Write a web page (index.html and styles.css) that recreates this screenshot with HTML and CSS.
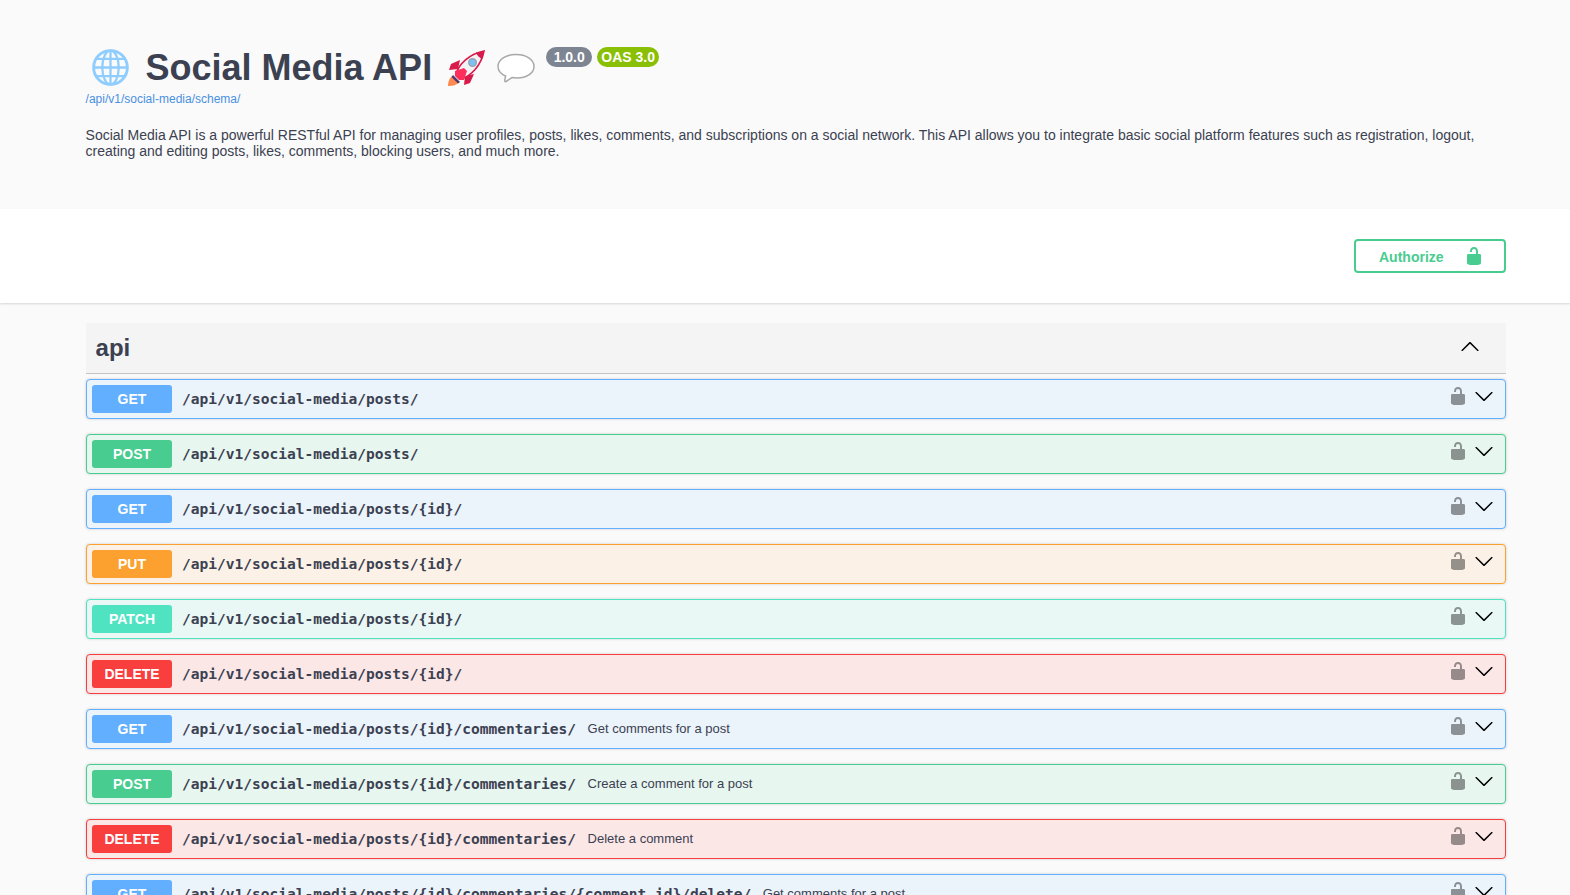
FILE: index.html
```html
<!DOCTYPE html>
<html lang="en">
<head>
<meta charset="utf-8">
<title>Social Media API</title>
<link rel="stylesheet" href="styles.css">
</head>
<body>
<svg class="defs" width="0" height="0" aria-hidden="true">
  <symbol id="lock" viewBox="0 0 20 20"><path d="M15.8 8H14V5.6C14 2.703 12.665 1 10 1 7.334 1 6 2.703 6 5.6V6h2v-.801C8 3.754 8.797 3 10 3c1.203 0 2 .754 2 2.199V8H4c-.553 0-1 .646-1 1.199V17c0 .549.428 1.139.951 1.307l1.197.387C5.672 18.861 6.55 19 7.1 19h5.8c.549 0 1.428-.139 1.951-.307l1.196-.387c.524-.167.953-.757.953-1.306V9.199C17 8.646 16.352 8 15.8 8z"/></symbol>
  <symbol id="arrow" viewBox="0 0 20 20"><path d="M17.418 6.109c.272-.268.709-.268.979 0s.271.701 0 .969l-7.908 7.83c-.27.268-.707.268-.979 0l-7.908-7.83c-.27-.268-.27-.701 0-.969.271-.268.709-.268.979 0L10 13.25l7.418-7.141z"/></symbol>
</svg>

<header class="info">
  <div class="title-row">
    <svg class="emoji globe" viewBox="0 0 36 36" fill="none" stroke="#90cdff" stroke-width="2.2">
      <circle cx="18" cy="18" r="16.4" stroke-width="2.8"/>
      <ellipse cx="18" cy="18" rx="8" ry="16.4"/>
      <path d="M18 1.600v32.800M1.600 18h32.800M4.200 9.500h27.600M4.200 26.500h27.600"/>
    </svg>
    <h1 class="title">Social Media API</h1>
    <svg class="emoji rocket" viewBox="0 0 38 38">
      <path d="M1 36c0-5 2-9 5-10l6 6c-2 3-6 4-11 4z" fill="#ff8a50"/>
      <path d="M13 10 4 14l-2 6 9-1z" fill="#d81b4a"/>
      <path d="M27 24l-4 9-6 2 1-9z" fill="#d81b4a"/>
      <path d="M9 24C12 14 22 4 37 1c-3 15-13 25-23 28z" fill="#f2f2f4" stroke="#d81b4a" stroke-width="1.600"/>
      <path d="M29 2.500 37 1l-1.500 8c-3-1-5.500-3.500-6.500-6.500z" fill="#d81b4a"/>
      <circle cx="25.500" cy="12.500" r="3.800" fill="#7cc0f5" stroke="#9aa3ad" stroke-width="1.400"/>
      <path d="M8 21l9-3 3 3-3 9-5 0-4-4z" fill="#ff2f5c"/>
      <path d="M6 25l7 7-2 1.500-6.500-6.500z" fill="#4a3a70"/>
    </svg>
    <svg class="emoji bubble" viewBox="0 0 38 30" fill="#ffffff" stroke="#a9a9a9" stroke-width="1.500">
      <path d="M19 1.500c10 0 18 5 18 12s-8 11.500-17 11.500c-2 0-4-.2-5-.4L9 28.500c-.8.4-1.500-.2-1.300-1l.9-4.500C4 21 1 17.500 1 13.500 1 6.500 9 1.500 19 1.500z"/>
    </svg>
    <div class="pills">
      <span class="pill version">1.0.0</span>
      <span class="pill oas">OAS 3.0</span>
    </div>
  </div>
  <a class="schema-link" href="#">/api/v1/social-media/schema/</a>
  <p class="description">Social Media API is a powerful RESTful API for managing user profiles, posts, likes, comments, and subscriptions on a social network. This API allows you to integrate basic social platform features such as registration, logout, creating and editing posts, likes, comments, blocking users, and much more.</p>
</header>

<section class="scheme">
  <button class="authorize" type="button"><span>Authorize</span><svg class="auth-lock"><use href="#lock"/></svg></button>
</section>

<main class="wrapper">
  <div class="tag">
    <h3 class="tag-name">api</h3>
    <svg class="tag-arrow"><use href="#arrow"/></svg>
  </div>
  <div class="ops">
    <div class="op get"><span class="method">GET</span><span class="path">/api/v1/social-media/posts/</span><span class="desc"></span><svg class="op-lock"><use href="#lock"/></svg><svg class="op-arrow"><use href="#arrow"/></svg></div>
    <div class="op post"><span class="method">POST</span><span class="path">/api/v1/social-media/posts/</span><span class="desc"></span><svg class="op-lock"><use href="#lock"/></svg><svg class="op-arrow"><use href="#arrow"/></svg></div>
    <div class="op get"><span class="method">GET</span><span class="path">/api/v1/social-media/posts/{id}/</span><span class="desc"></span><svg class="op-lock"><use href="#lock"/></svg><svg class="op-arrow"><use href="#arrow"/></svg></div>
    <div class="op put"><span class="method">PUT</span><span class="path">/api/v1/social-media/posts/{id}/</span><span class="desc"></span><svg class="op-lock"><use href="#lock"/></svg><svg class="op-arrow"><use href="#arrow"/></svg></div>
    <div class="op patch"><span class="method">PATCH</span><span class="path">/api/v1/social-media/posts/{id}/</span><span class="desc"></span><svg class="op-lock"><use href="#lock"/></svg><svg class="op-arrow"><use href="#arrow"/></svg></div>
    <div class="op delete"><span class="method">DELETE</span><span class="path">/api/v1/social-media/posts/{id}/</span><span class="desc"></span><svg class="op-lock"><use href="#lock"/></svg><svg class="op-arrow"><use href="#arrow"/></svg></div>
    <div class="op get"><span class="method">GET</span><span class="path">/api/v1/social-media/posts/{id}/commentaries/</span><span class="desc">Get comments for a post</span><svg class="op-lock"><use href="#lock"/></svg><svg class="op-arrow"><use href="#arrow"/></svg></div>
    <div class="op post"><span class="method">POST</span><span class="path">/api/v1/social-media/posts/{id}/commentaries/</span><span class="desc">Create a comment for a post</span><svg class="op-lock"><use href="#lock"/></svg><svg class="op-arrow"><use href="#arrow"/></svg></div>
    <div class="op delete"><span class="method">DELETE</span><span class="path">/api/v1/social-media/posts/{id}/commentaries/</span><span class="desc">Delete a comment</span><svg class="op-lock"><use href="#lock"/></svg><svg class="op-arrow"><use href="#arrow"/></svg></div>
    <div class="op get"><span class="method">GET</span><span class="path">/api/v1/social-media/posts/{id}/commentaries/{comment_id}/delete/</span><span class="desc">Get comments for a post</span><svg class="op-lock"><use href="#lock"/></svg><svg class="op-arrow"><use href="#arrow"/></svg></div>
  </div>
</main>
</body>
</html>
```

FILE: styles.css
```css
* { box-sizing: border-box; }
html { overflow: hidden; }
body {
  margin: 0;
  background: #fafafa;
  color: #3b4151;
  font-family: "Liberation Sans", Arial, sans-serif;
}
.defs { display: block; height: 0; }

.info {
  height: 209px;
  padding: 47px 64px 0 85.6px;
  background: #fafafa;
}
.title-row {
  display: flex;
  align-items: flex-start;
  height: 41px;
}
.emoji { display: block; flex: none; }
.globe { width: 37px; height: 37px; margin: 2px 16.4px 0 6.4px; }
.title {
  margin: 0;
  font-size: 36px;
  line-height: 41px;
  font-weight: 700;
  color: #3b4151;
}
.rocket { width: 38px; height: 38px; margin: 3px 0 0 15px; }
.bubble { width: 38px; height: 30px; margin: 6px 0 0 12px; }
.pills { display: flex; gap: 5px; margin-left: 11px; }
.pill {
  height: 20px;
  padding: 0 6px;
  border-radius: 10px;
  color: #fff;
  font-size: 14px;
  font-weight: 700;
  line-height: 20px;
}
.version { background: #7d8492; padding: 0 7.5px; }
.oas { background: #89bf04; padding: 0 4px; }
.schema-link {
  display: block;
  margin-top: 4px;
  font-size: 12px;
  line-height: 14px;
  color: #4990e2;
  text-decoration: none;
}
.description {
  margin: 21px 0 0;
  font-size: 14px;
  line-height: 16px;
  color: #3b4151;
}

.scheme {
  display: flex;
  justify-content: flex-end;
  height: 94px;
  padding: 30px 64px 0 86px;
  background: #fff;
  box-shadow: 0 1px 2px rgba(0, 0, 0, .15);
}
.authorize {
  display: flex;
  align-items: center;
  width: 152px;
  height: 34px;
  padding: 0 20px 0 23px;
  background: transparent;
  border: 2px solid #49cc90;
  border-radius: 4px;
  color: #49cc90;
  font-family: inherit;
  font-size: 14px;
  font-weight: 700;
}
.authorize span { flex: 1; text-align: left; padding-top: 2px; }
.auth-lock { width: 20px; height: 20px; fill: #49cc90; }

.wrapper { padding: 20px 64px 0 86px; }
.tag {
  display: flex;
  align-items: center;
  justify-content: space-between;
  height: 51px;
  padding: 0 26px 0 9.6px;
  background: #f4f4f4;
  border-bottom: 1px solid #c3c4c8;
}
.tag-name {
  margin: 0;
  font-size: 24px;
  font-weight: 700;
  color: #3b4151;
}
.tag-arrow { width: 20px; height: 20px; margin-bottom: 2px; transform: rotate(180deg); }

.ops { padding-top: 5px; display: flex; flex-direction: column; gap: 15px; }
.op {
  display: flex;
  align-items: center;
  height: 40px;
  padding: 0 11px 0 5px;
  border: 1px solid;
  border-radius: 4px;
  box-shadow: 0 0 3px rgba(0, 0, 0, .19);
}
.method {
  flex: none;
  width: 80px;
  height: 28px;
  border-radius: 3px;
  color: #fff;
  font-size: 14px;
  font-weight: 700;
  line-height: 28px;
  text-align: center;
}
.path {
  flex: none;
  margin-bottom: 2px;
  padding: 0 10px;
  font-family: "DejaVu Sans Mono", "Liberation Mono", monospace;
  font-size: 14.56px;
  font-weight: 700;
  color: #3b4151;
}
.desc {
  flex: 1;
  margin: 0 0 2px 1.5px;
  font-size: 13px;
  color: #3b4151;
}
.op-lock { flex: none; width: 20px; height: 20px; margin: 0 6px 6px 0; fill: #000; opacity: .4; }
.op-arrow { flex: none; width: 20px; height: 20px; margin-bottom: 7px; }

.get { background: #ebf3fb; border-color: #61affe; }
.get .method { background: #61affe; }
.post { background: #e8f6f0; border-color: #49cc90; }
.post .method { background: #49cc90; }
.put { background: #fbf1e7; border-color: #fca130; }
.put .method { background: #fca130; }
.patch { background: #e9f8f5; border-color: #50e3c2; }
.patch .method { background: #50e3c2; }
.delete { background: #fce7e7; border-color: #f93e3e; }
.delete .method { background: #f93e3e; }
```
